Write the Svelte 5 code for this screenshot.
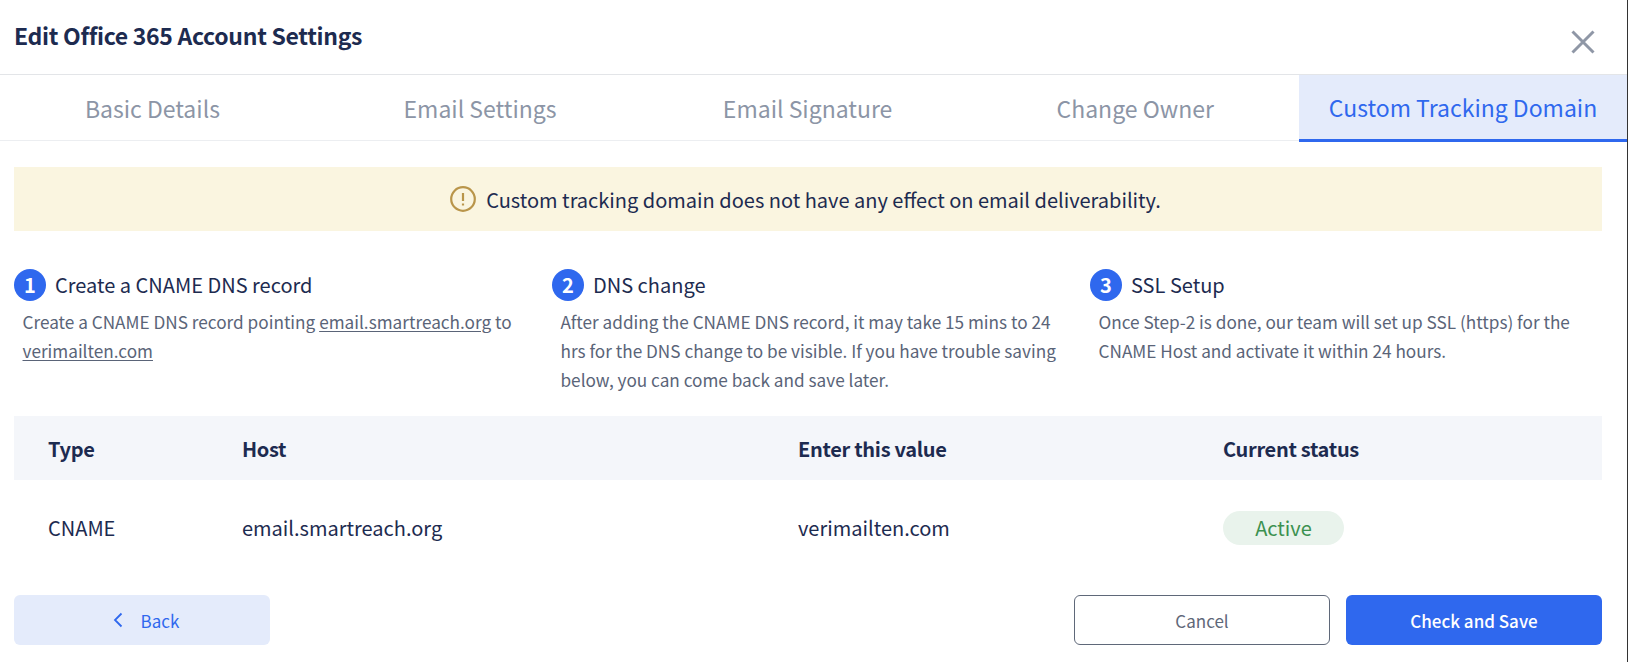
<script>
  const tabs = ['Basic Details', 'Email Settings', 'Email Signature', 'Change Owner', 'Custom Tracking Domain']
  const active = 'Custom Tracking Domain'
</script>

<div class="modal">
  <header class="head">
    <h1>Edit Office 365 Account Settings</h1>
    <svg class="close" viewBox="0 0 24 24" width="24" height="24" aria-label="Close">
      <path d="M1.5 1.5 L22.5 22.5 M22.5 1.5 L1.5 22.5" />
    </svg>
  </header>

  <nav class="tabs">
    {#each tabs as tab}
      <div class="tab" class:active={tab === active}>{tab}</div>
    {/each}
  </nav>

  <div class="body">
    <div class="notice">
      <svg viewBox="0 0 26 26" width="26" height="26">
        <circle cx="13" cy="13" r="11.8" />
        <path d="M13 7 V15 M13 17.6 V19.4" />
      </svg>
      <span>Custom tracking domain does not have any effect on email deliverability.</span>
    </div>

    <div class="steps">
      <section class="step">
        <div class="step-title"><span class="num">1</span>Create a CNAME DNS record</div>
        <p>Create a CNAME DNS record pointing <u>email.smartreach.org</u> to <u>verimailten.com</u></p>
      </section>
      <section class="step">
        <div class="step-title"><span class="num">2</span>DNS change</div>
        <p>After adding the CNAME DNS record, it may take 15 mins to 24 hrs for the DNS change to be visible. If you have trouble saving below, you can come back and save later.</p>
      </section>
      <section class="step">
        <div class="step-title"><span class="num">3</span>SSL Setup</div>
        <p>Once Step-2 is done, our team will set up SSL (https) for the CNAME Host and activate it within 24 hours.</p>
      </section>
    </div>

    <div class="table">
      <div class="row th">
        <div>Type</div>
        <div>Host</div>
        <div>Enter this value</div>
        <div>Current status</div>
      </div>
      <div class="row td">
        <div>CNAME</div>
        <div>email.smartreach.org</div>
        <div>verimailten.com</div>
        <div><span class="pill">Active</span></div>
      </div>
    </div>

    <footer class="actions">
      <button class="btn back">
        <svg viewBox="0 0 10 16" width="10" height="16"><path d="M8.5 1.5 L2 8 L8.5 14.5" /></svg>
        Back
      </button>
      <div class="right">
        <button class="btn cancel">Cancel</button>
        <button class="btn save">Check and Save</button>
      </div>
    </footer>
  </div>
</div>

<style>
  :global(body) {
    margin: 0;
    background: #fff;
  }

  .modal {
    width: 1627px;
    height: 662px;
    border-right: 1px solid #333;
    font-family: "Noto Sans CJK SC", "Noto Sans", sans-serif;
    color: #1d2b50;
    overflow: hidden;
  }

  .head {
    height: 74px;
    padding: 0 14px;
    display: flex;
    align-items: center;
    justify-content: space-between;
    border-bottom: 1px solid #e3e5e8;
  }

  h1 {
    margin: 0 0 5px;
    font-size: 23px;
    font-weight: 600;
    letter-spacing: -0.3px;
    line-height: 32px;
  }

  .close {
    margin: 9px 18px 0 0;
    fill: none;
    stroke: #8f97a6;
    stroke-width: 3;
  }

  .tabs {
    display: flex;
    justify-content: flex-end;
    height: 65px;
    border-bottom: 1px solid #eceef1;
  }

  .tab {
    flex: none;
    width: 327.6px;
    display: flex;
    align-items: center;
    justify-content: center;
    font-size: 23px;
    color: #8c95a6;
  }

  .tab.active {
    width: 328px;
    height: 67px;
    box-sizing: border-box;
    background: #e4ebfb;
    color: #2f68ee;
    border-bottom: 3px solid #2f68ee;
  }

  .body {
    padding: 26px 25px 0 14px;
  }

  .notice {
    height: 64px;
    padding-right: 5px;
    display: flex;
    align-items: center;
    justify-content: center;
    gap: 10px;
    background: #faf5e0;
    font-size: 20px;
  }

  .notice svg {
    fill: none;
    stroke: #b9954a;
    stroke-width: 2.2;
  }

  .steps {
    display: grid;
    grid-template-columns: 538px 538px 1fr;
    margin-top: 38px;
    height: 147px;
  }

  .step-title {
    display: flex;
    align-items: center;
    gap: 9px;
    font-size: 20px;
    line-height: 32px;
  }

  .num {
    width: 32px;
    height: 32px;
    border-radius: 50%;
    background: #2f68ee;
    color: #fff;
    font-weight: 700;
    display: flex;
    align-items: center;
    justify-content: center;
  }

  p {
    margin: 6px 0 0 8.5px;
    width: 510px;
    font-size: 17.2px;
    line-height: 29px;
    color: #5a6478;
  }

  u {
    text-underline-offset: 2px;
  }

  .row {
    display: grid;
    grid-template-columns: 194px 556px 425px 1fr;
    padding-left: 34px;
    align-items: center;
    font-size: 20px;
  }

  .th {
    height: 64px;
    background: #f4f6fa;
    font-weight: 600;
    letter-spacing: -0.3px;
  }

  .td {
    height: 95px;
  }

  .pill {
    display: inline-block;
    width: 121px;
    height: 34px;
    line-height: 34px;
    border-radius: 17px;
    background: #e9f3ec;
    color: #3c9150;
    text-align: center;
  }

  .actions {
    margin-top: 20px;
    display: flex;
    justify-content: space-between;
  }

  .right {
    display: flex;
    gap: 16px;
  }

  .btn {
    width: 256px;
    height: 50px;
    box-sizing: border-box;
    border: none;
    border-radius: 6px;
    font-family: inherit;
    font-size: 17px;
    display: flex;
    align-items: center;
    justify-content: center;
    gap: 18px;
  }

  .back {
    padding-left: 14px;
    background: #e4ebfb;
    color: #2f68ee;
  }

  .back svg {
    fill: none;
    stroke: #2f68ee;
    stroke-width: 1.8;
  }

  .cancel {
    background: #fff;
    border: 1px solid #5f6879;
    color: #5f6879;
  }

  .save {
    background: #2f68ee;
    color: #fff;
    font-weight: 500;
  }
</style>
